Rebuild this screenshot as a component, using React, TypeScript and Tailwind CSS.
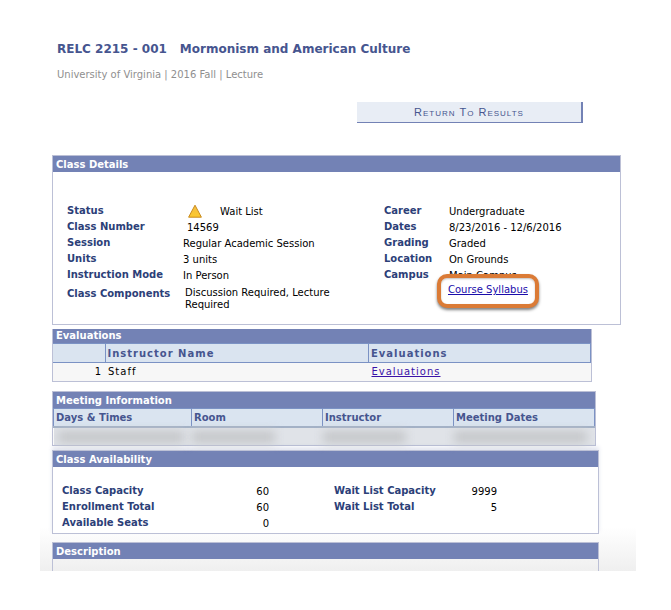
import type { ReactNode } from "react";

type Row = { label: string; value: ReactNode };

const leftDetails: Row[] = [
  {
    label: "Status",
    value: (
      <span className="flex items-center gap-[18px] pl-[5px]">
        <svg width="14" height="14" viewBox="0 0 14 14" aria-hidden="true">
          <defs>
            <linearGradient id="warn" x1="0" y1="0" x2="0" y2="1">
              <stop offset="0" stopColor="#f2bd45" />
              <stop offset="1" stopColor="#fcc92c" />
            </linearGradient>
          </defs>
          <path d="M7 0.2 L13.4 12.2 H0.6 Z" fill="url(#warn)" stroke="#c98a1c" strokeLinejoin="round" />
        </svg>
        Wait List
      </span>
    ),
  },
  { label: "Class Number", value: <span className="pl-1">14569</span> },
  { label: "Session", value: "Regular Academic Session" },
  { label: "Units", value: "3 units" },
  { label: "Instruction Mode", value: "In Person" },
];

const rightDetails: Row[] = [
  { label: "Career", value: "Undergraduate" },
  { label: "Dates", value: "8/23/2016 - 12/6/2016" },
  { label: "Grading", value: "Graded" },
  { label: "Location", value: "On Grounds" },
  { label: "Campus", value: "Main Campus" },
];

const meetingColumns = [
  { title: "Days & Times", width: "w-[138px]", blur: "mr-2 ml-1" },
  { title: "Room", width: "w-[131px]", blur: "mr-12 ml-0" },
  { title: "Instructor", width: "w-[131px]", blur: "mr-12 ml-0" },
  { title: "Meeting Dates", width: "", blur: "mr-2 ml-0" },
];

function SectionTitle({ children }: { children: ReactNode }) {
  return (
    <h2 className="bg-[#7382b5] px-[3px] pt-px text-[10px] leading-[15px] font-bold text-white">{children}</h2>
  );
}

function DetailRow({ label, value }: Row) {
  return (
    <>
      <dt className="font-bold text-[#2c4078]">{label}</dt>
      <dd className="pt-px text-black">{value}</dd>
    </>
  );
}

export default function App() {
  return (
    <main className="mr-[35px] ml-10 bg-[linear-gradient(to_top,#efefef,#ffffff_44px)] pt-[41px] pl-3 font-['DejaVu_Sans',Verdana,sans-serif] text-[10px] leading-4">
      <header className="pl-[5px]">
        <h1 className="flex gap-[13px] text-[12px] leading-4 font-bold text-[#46558f]">
          <span>RELC 2215 - 001</span>
          <span>Mormonism and American Culture</span>
        </h1>
        <p className="mt-[10px] text-[#8f8f8f]">University of Virginia | 2016 Fall | Lecture</p>
        <div className="mt-[19px] mr-[53px] flex justify-end">
          <button
            type="button"
            className="h-[21px] w-[226px] border-r-2 border-b border-[#7382b5] bg-[#e8edf5] font-['Liberation_Sans',Arial,sans-serif] text-[11px] leading-4 tracking-[1px] text-[#46558f] [font-variant:small-caps]"
          >
            Return To Results
          </button>
        </div>
      </header>

      <section className="mt-8 mr-[15px] border border-[#bcc0d6] pb-[13px]">
        <SectionTitle>Class Details</SectionTitle>
        <div className="grid grid-cols-[317px_1fr] pt-[31px] pl-[14px]">
          <dl className="grid grid-cols-[116px_1fr] auto-rows-[16px]">
            {leftDetails.map((row) => (
              <DetailRow key={row.label} {...row} />
            ))}
          </dl>
          <dl className="grid grid-cols-[65px_1fr] auto-rows-[16px]">
            {rightDetails.map((row) => (
              <DetailRow key={row.label} {...row} />
            ))}
          </dl>
          <dl className="grid grid-cols-[118px_150px] pt-[3px]">
            <dt className="font-bold text-[#2c4078]">Class Components</dt>
            <dd className="pt-px leading-3">Discussion Required, Lecture Required</dd>
          </dl>
          <div className="-mt-px pl-16">
            <a href="#syllabus" className="relative inline-block text-[#1a0dab] underline">
              <span className="absolute -inset-x-[11px] -top-2 h-[34px] rounded-[10px] border-4 border-[#db7b36] bg-white shadow-[0_2px_3px_rgba(0,0,0,0.5),inset_0_1px_2px_rgba(0,0,0,0.25)]" />
              <span className="relative">Course Syllabus</span>
            </a>
          </div>
        </div>
      </section>

      <section className="mt-1 mr-11 border border-t-0 border-[#bcc0d6]">
        <h2 className="bg-[#7382b5] px-[3px] text-[10px] leading-[14px] font-bold text-white">Evaluations</h2>
        <table className="w-full table-fixed border-collapse text-left tracking-[1px]">
          <thead className="bg-[#dae4f0] text-[#46558f]">
            <tr className="h-[19px] border-y border-[#7b92c4]">
              <th className="w-[52px] p-0" />
              <th className="border-l border-[#7b92c4] px-[2px] pt-px pb-0">Instructor Name</th>
              <th className="w-[222px] border-x border-[#7b92c4] px-[2px] pt-px pb-0">Evaluations</th>
            </tr>
          </thead>
          <tbody className="bg-[#f7f7f7]">
            <tr className="h-[18px]">
              <td className="px-[3px] py-0 text-right">1</td>
              <td className="px-[3px] py-0">Staff</td>
              <td className="px-[3px] py-0">
                <a href="#evaluations" className="text-[#3a12a8] underline">
                  Evaluations
                </a>
              </td>
            </tr>
          </tbody>
        </table>
      </section>

      <section className="mt-[9px] mr-10 border border-[#bcc0d6]">
        <SectionTitle>Meeting Information</SectionTitle>
        <table className="w-full table-fixed border-collapse text-left">
          <thead className="bg-[#dae4f0] text-[#46558f]">
            <tr className="h-[19px] border-t border-b-2 border-t-[#7b92c4] border-b-[#a3b1c6]">
              {meetingColumns.map((col) => (
                <th key={col.title} className={`border-x border-[#7b92c4] px-[2px] pt-px pb-0 ${col.width}`}>
                  {col.title}
                </th>
              ))}
            </tr>
          </thead>
          <tbody className="bg-[#e0e3e8]">
            <tr className="h-[18px]">
              {meetingColumns.map((col) => (
                <td key={col.title} className="p-0">
                  <div className={`h-3 bg-[#c5c7ca] blur-[5px] ${col.blur}`} />
                </td>
              ))}
            </tr>
          </tbody>
        </table>
      </section>

      <section className="mt-1 mr-[37px] border border-[#bcc0d6] bg-white pb-[2px] shadow-[0_-3px_4px_rgba(115,130,181,0.2)]">
        <SectionTitle>Class Availability</SectionTitle>
        <div className="flex items-start pt-4 pl-[9px]">
          <dl className="grid w-[272px] grid-cols-[157px_50px] auto-rows-[16px] [&>dd]:text-right">
            <DetailRow label="Class Capacity" value="60" />
            <DetailRow label="Enrollment Total" value="60" />
            <DetailRow label="Available Seats" value="0" />
          </dl>
          <dl className="grid grid-cols-[113px_50px] auto-rows-[16px] [&>dd]:text-right">
            <DetailRow label="Wait List Capacity" value="9999" />
            <DetailRow label="Wait List Total" value="5" />
          </dl>
        </div>
      </section>

      <section className="mt-2 mr-[37px] border border-b-0 border-[#bcc0d6] pb-3">
        <SectionTitle>Description</SectionTitle>
      </section>
    </main>
  );
}
